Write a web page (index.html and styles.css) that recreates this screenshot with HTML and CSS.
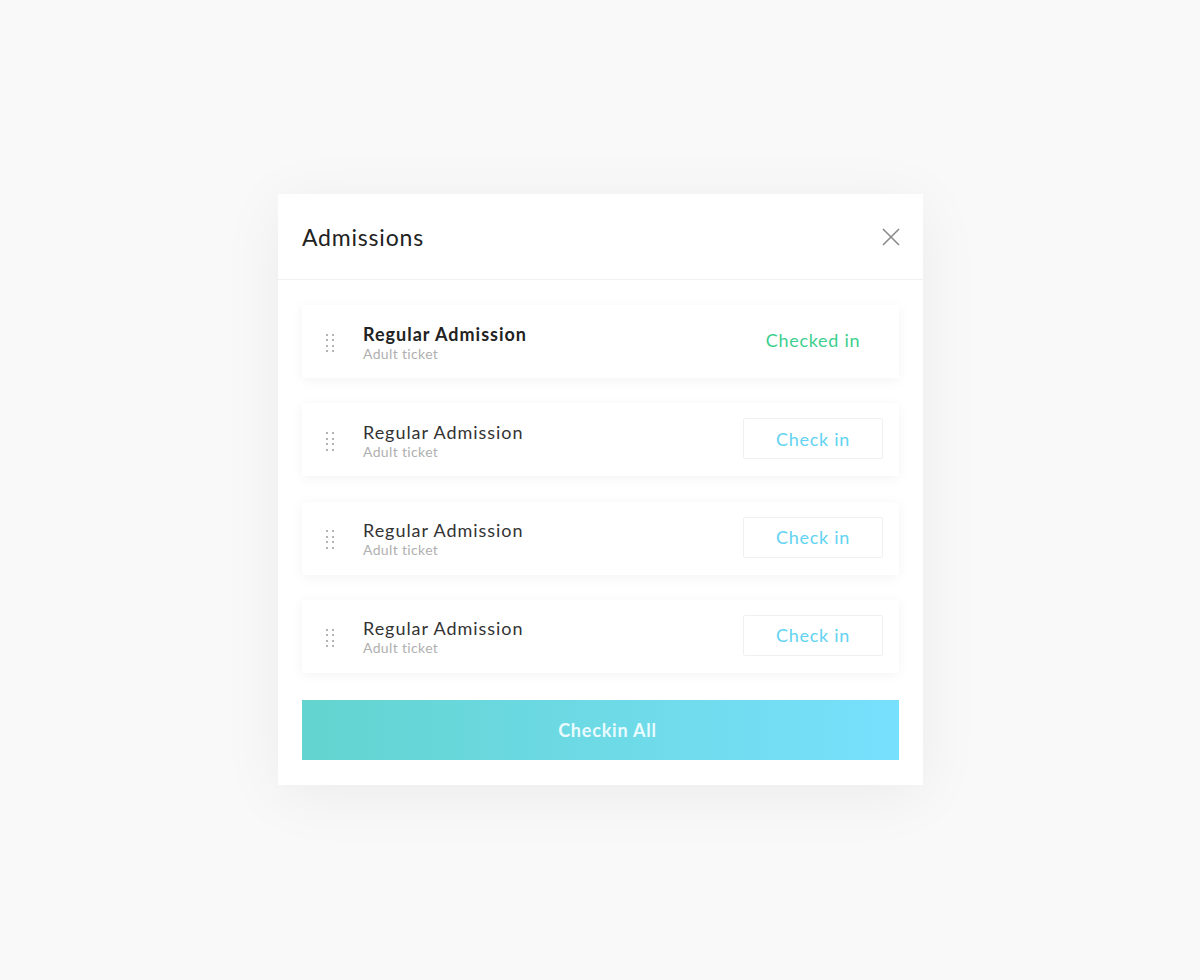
FILE: index.html
```html
<!DOCTYPE html>
<html lang="en">
<head>
    <meta charset="UTF-8">
    <meta name="viewport" content="width=device-width, initial-scale=1.0">
    <title>Admissions</title>
    <link rel="stylesheet" href="styles.css">
</head>
<body>
    <div class="modal">
        <div class="modal-header">
            <h2>Admissions</h2>
            <button class="close" aria-label="Close">
                <svg width="18" height="18" viewBox="0 0 18 18">
                    <path d="M1 1L17 17M17 1L1 17" stroke="#8a8a8a" stroke-width="1.6" fill="none"/>
                </svg>
            </button>
        </div>
        <div class="modal-body">
            <ul class="tickets">
                <li class="ticket">
                    <span class="handle"><i></i><i></i><i></i><i></i><i></i><i></i><i></i><i></i></span>
                    <div class="info">
                        <div class="name bold">Regular Admission</div>
                        <div class="type">Adult ticket</div>
                    </div>
                    <span class="status">Checked in</span>
                </li>
                <li class="ticket">
                    <span class="handle"><i></i><i></i><i></i><i></i><i></i><i></i><i></i><i></i></span>
                    <div class="info">
                        <div class="name">Regular Admission</div>
                        <div class="type">Adult ticket</div>
                    </div>
                    <button class="checkin">Check in</button>
                </li>
                <li class="ticket">
                    <span class="handle"><i></i><i></i><i></i><i></i><i></i><i></i><i></i><i></i></span>
                    <div class="info">
                        <div class="name">Regular Admission</div>
                        <div class="type">Adult ticket</div>
                    </div>
                    <button class="checkin">Check in</button>
                </li>
                <li class="ticket">
                    <span class="handle"><i></i><i></i><i></i><i></i><i></i><i></i><i></i><i></i></span>
                    <div class="info">
                        <div class="name">Regular Admission</div>
                        <div class="type">Adult ticket</div>
                    </div>
                    <button class="checkin">Check in</button>
                </li>
            </ul>
            <button class="checkin-all">Checkin All</button>
        </div>
    </div>
</body>
</html>
```

FILE: styles.css
```css
body {
    font-family: Lato, "Open Sans", sans-serif;
    background-color: #f9f9f9;
    margin: 0;
    height: 980px;
}

.modal {
    position: relative;
    top: 194px;
    margin-left: 278px;
    width: 645px;
    background-color: #fff;
    box-shadow: 0 10px 60px rgba(0, 0, 0, 0.06);
}

.modal-header {
    height: 86px;
    box-sizing: border-box;
    border-bottom: 1px solid #f1f1f1;
    display: flex;
    align-items: center;
    justify-content: space-between;
    padding: 0 22px 0 24px;
}

.modal-header h2 {
    margin: 0;
    font-size: 23px;
    font-weight: 400;
    color: #222;
    letter-spacing: 0.8px;
}

.close {
    border: none;
    background: none;
    padding: 0;
    width: 20px;
    height: 20px;
    display: flex;
    align-items: center;
    justify-content: center;
}

.modal-body {
    padding: 25px 24px 25px 24px;
}

.tickets {
    list-style: none;
    margin: 0;
    padding: 0;
    display: flex;
    flex-direction: column;
    gap: 25.3px;
}

.ticket {
    height: 73px;
    display: flex;
    align-items: center;
    padding: 0 16px 0 24px;
    background-color: #fff;
    box-shadow: 0 2px 12px rgba(0, 0, 0, 0.05);
}

.handle {
    display: grid;
    grid-template-columns: 2px 2px;
    grid-auto-rows: 2px;
    column-gap: 4px;
    row-gap: 3.5px;
    width: 8px;
    margin-right: 29px;
    margin-top: 3px;
}

.handle i {
    background-color: #b4b4b4;
}

.info {
    flex: 1;
    margin-top: 1px;
}

.name {
    font-size: 18px;
    color: #333;
    line-height: 22px;
    letter-spacing: 0.95px;
}

.name.bold {
    font-weight: 700;
    color: #222;
    letter-spacing: 1px;
}

.type {
    font-size: 14px;
    color: #b0b0b0;
    line-height: 17px;
    letter-spacing: 0.35px;
}

.status {
    width: 140px;
    text-align: center;
    font-size: 18px;
    color: #3ccf8e;
    letter-spacing: 0.7px;
    margin-top: -3px;
}

.checkin {
    width: 140px;
    height: 41px;
    margin-top: -2px;
    background: #fff;
    border: 1px solid #f0f0f0;
    border-radius: 2px;
    font-family: inherit;
    font-size: 18px;
    color: #62d3f2;
    letter-spacing: 0.7px;
}

.checkin-all {
    display: block;
    width: 100%;
    height: 60px;
    margin-top: 27px;
    padding-left: 20px;
    border: none;
    background: linear-gradient(to right, #63d4cf, #77e0fd);
    color: #eafbff;
    font-family: inherit;
    font-size: 18px;
    font-weight: 700;
    letter-spacing: 0.8px;
}
```
